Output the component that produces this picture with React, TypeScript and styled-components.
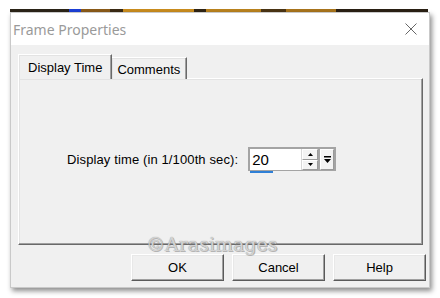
import React from "react";
import styled, { createGlobalStyle } from "styled-components";

const Global = createGlobalStyle`
  html, body { margin: 0; padding: 0; background: #ffffff; }
  body { width: 440px; height: 298px; overflow: hidden; font-family: "Liberation Sans", Arial, sans-serif; }
`;

const Page = styled.div`
  padding: 9px 0 0 10px;
  position: relative;
`;

const Strip = styled.div`
  width: 418px;
  height: 3px;
  background: linear-gradient(90deg, #2b2418 0 14%, #1c3fd6 14% 17%, #8a5a18 17% 24%, #3a2a14 24% 27%, #c98c1e 27% 44%, #2f2414 44% 47%, #b9821e 47% 60%, #4a3414 60% 66%, #a8741c 66% 78%, #2a2014 78% 100%);
`;

const Window = styled.div`
  width: 418px;
  background: #f0f0f0;
  border: 1px solid #c9c9c9;
  box-shadow: 2px 3px 5px rgba(0, 0, 0, 0.45);
`;

const TitleBar = styled.div`
  height: 32px;
  background: #ffffff;
  display: flex;
  align-items: center;
  justify-content: space-between;
  padding: 0 12px 0 2px;
`;

const Title = styled.div`
  font-family: "Noto Sans", "Open Sans", sans-serif;
  font-size: 14px;
  color: #9a9a9a;
`;

const Body = styled.div`
  padding: 9px 4px 6px 7px;
`;

const TabRow = styled.div`
  display: flex;
  align-items: flex-end;
  height: 25px;
  margin-bottom: -1px;
  position: relative;
  z-index: 1;
`;

const Tab = styled.div<{ $active?: boolean }>`
  box-sizing: border-box;
  height: ${(p) => (p.$active ? 25 : 22)}px;
  padding: ${(p) => (p.$active ? "5px 9px 0 9px" : "4px 6px 0 5px")};
  font-size: 13px;
  color: #000;
  background: #f0f0f0;
  border-top: 1px solid #ffffff;
  border-left: ${(p) => (p.$active ? "1px solid #ffffff" : "none")};
  border-right: 1px solid #696969;
  box-shadow: inset -1px 0 #a0a0a0, inset 1px 1px #e3e3e3;
`;

const Panel = styled.div`
  box-sizing: border-box;
  width: 405px;
  height: 167px;
  border: 1px solid;
  border-color: #ffffff #696969 #696969 #ffffff;
  box-shadow: inset -1px -1px #a0a0a0, inset 1px 1px #e3e3e3;
  padding: 68px 0 0 48px;
`;

const FieldRow = styled.div`
  display: flex;
  align-items: center;
  gap: 10px;
`;

const Label = styled.div`
  font-size: 13px;
  letter-spacing: 0.12px;
  color: #000;
`;

const SpinBox = styled.div`
  box-sizing: border-box;
  width: 88px;
  height: 24px;
  display: flex;
  border: 2px solid #a4a4a4;
  border-bottom-width: 1px;
  background: #ffffff;
  position: relative;
`;

const Value = styled.div`
  flex: 1;
  font-size: 15px;
  padding-left: 2px;
  display: flex;
  align-items: center;
  color: #000;
  position: relative;
`;

const Focus = styled.div`
  position: absolute;
  left: 0;
  bottom: -3px;
  width: 23px;
  height: 2px;
  background: #2f7fd6;
`;

const SpinCol = styled.div`
  width: 16px;
  display: flex;
  flex-direction: column;
  border-left: 1px solid #d8d8d8;
`;

const SpinBtn = styled.div`
  flex: 1;
  display: flex;
  align-items: center;
  justify-content: center;
  background: #f3f3f3;
  border: 1px solid;
  border-color: #ffffff #9a9a9a #9a9a9a #ffffff;
`;

const Sep = styled.div`
  width: 2px;
  background: #a4a4a4;
`;

const DropBtn = styled.div`
  width: 12px;
  display: flex;
  align-items: center;
  justify-content: center;
  background: #f3f3f3;
  border: 1px solid;
  border-color: #ffffff #9a9a9a #9a9a9a #ffffff;
`;

const ButtonRow = styled.div`
  display: flex;
  justify-content: flex-end;
  gap: 8px;
  margin-top: 9px;
  margin-right: -1px;
`;

const Button = styled.div`
  box-sizing: border-box;
  width: 93px;
  height: 27px;
  display: flex;
  align-items: center;
  justify-content: center;
  font-size: 13px;
  color: #000;
  background: #f0f0f0;
  border: 1px solid;
  border-color: #ffffff #5a5a5a #5a5a5a #ffffff;
  box-shadow: inset -1px -1px #a0a0a0, inset 1px 1px #e8e8e8;
`;

const Watermark = styled.div`
  position: absolute;
  left: 146px;
  top: 233px;
  font-family: "DejaVu Serif", "Liberation Serif", serif;
  font-size: 19px;
  color: rgba(220, 220, 220, 0.9);
  text-shadow: 0 0 1px #8a8a8a, 1px 1px 0 rgba(130, 130, 130, 0.5);
  pointer-events: none;
`;

const Arrow = ({ dir }: { dir: "up" | "down" }) => (
  <svg width="5" height="3" viewBox="0 0 5 3">
    {dir === "up" ? <path d="M2.5 0 L5 3 L0 3 Z" fill="#000" /> : <path d="M0 0 L5 0 L2.5 3 Z" fill="#000" />}
  </svg>
);

export default function App() {
  return (
    <>
      <Global />
      <Page>
        <Strip />
        <Window>
          <TitleBar>
            <Title>Frame Properties</Title>
            <svg width="12" height="12" viewBox="0 0 12 12">
              <path d="M0.5 0.5 L11.5 11.5 M11.5 0.5 L0.5 11.5" stroke="#666" strokeWidth="1" />
            </svg>
          </TitleBar>
          <Body>
            <TabRow>
              <Tab $active>Display Time</Tab>
              <Tab>Comments</Tab>
            </TabRow>
            <Panel>
              <FieldRow>
                <Label>Display time (in 1/100th sec):</Label>
                <SpinBox>
                  <Value>
                    20
                    <Focus />
                  </Value>
                  <SpinCol>
                    <SpinBtn><Arrow dir="up" /></SpinBtn>
                    <SpinBtn><Arrow dir="down" /></SpinBtn>
                  </SpinCol>
                  <Sep />
                  <DropBtn>
                    <svg width="7" height="7" viewBox="0 0 7 7">
                      <rect x="0" y="0" width="7" height="1.5" fill="#000" />
                      <path d="M0 3 L7 3 L3.5 7 Z" fill="#000" />
                    </svg>
                  </DropBtn>
                </SpinBox>
              </FieldRow>
            </Panel>
            <ButtonRow>
              <Button>OK</Button>
              <Button>Cancel</Button>
              <Button>Help</Button>
            </ButtonRow>
          </Body>
        </Window>
        <Watermark>©Arasimages</Watermark>
      </Page>
    </>
  );
}
